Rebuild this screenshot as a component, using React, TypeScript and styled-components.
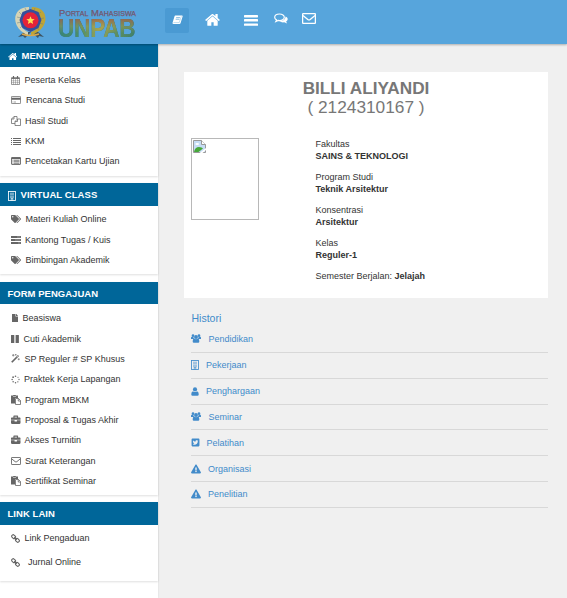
import React from 'react';
import styled, { createGlobalStyle } from 'styled-components';
import {
  FaTags, FaBriefcase, FaExclamationTriangle,
  FaTwitterSquare, FaFile,
} from 'react-icons/fa';

const GlobalStyle = createGlobalStyle`
  * { box-sizing: border-box; }
  body { margin: 0; background: #f0f0f0; font-family: "Liberation Sans", Arial, sans-serif; font-size: 9px; color: #333; }
`;

const Page = styled.div`
  height: 598px;
  display: flex;
  flex-direction: column;
  overflow: hidden;
`;
const TopBar = styled.header`
  position: relative;
  z-index: 1;
  height: 44px;
  flex: none;
  display: flex;
  align-items: flex-start;
  background: #57a5dc;
  box-shadow: 0 1px 2px rgba(0, 0, 0, 0.28);
`;
const Brand = styled.div`
  width: 165px;
  height: 44px;
  padding: 5px 0 0 14px;
  display: flex;
`;
const Wordmark = styled.div`
  width: 84px;
  margin: 3px 0 0 11px;
  white-space: nowrap;
`;
const Tagline = styled.div`
  height: 10px;
  line-height: 10px;
  font-size: 9.5px;
  font-variant: small-caps;
  letter-spacing: 0.05px;
  color: #74566f;
  -webkit-text-stroke: 0.25px #74566f;
  padding-left: 1px;
`;
const Acronym = styled.div`
  height: 20px;
  line-height: 20px;
  font-size: 26px;
  font-weight: bold;
  transform: scaleX(0.87);
  transform-origin: left;
  letter-spacing: -0.3px;
  width: 96px;
  color: transparent;
  background:
    linear-gradient(180deg, rgba(155, 100, 80, 0.85) 5%, rgba(175, 155, 80, 0.4) 42%, rgba(55, 120, 105, 0.1) 75%),
    linear-gradient(95deg, #38867a 0%, #4e9268 28%, #a9a950 50%, #629360 70%, #367c70 100%);
  background-clip: text;
  -webkit-background-clip: text;
  filter: drop-shadow(0.5px 0.6px 0.3px rgba(45, 75, 70, 0.6));
`;
const Nav = styled.nav`
  display: flex;
  align-items: flex-start;
`;
const NavItem = styled.a<{ $w: number; $top: number; $active?: boolean }>`
  width: ${(p) => p.$w}px;
  height: ${(p) => (p.$active ? 25 : 36)}px;
  margin-top: ${(p) => (p.$active ? 8 : 0)}px;
  padding-top: ${(p) => p.$top}px;
  border-radius: 2px;
  background: ${(p) => (p.$active ? '#4a9ad3' : 'transparent')};
  color: #fff;
  display: flex;
  justify-content: center;
  svg { display: block; }
`;
const Body = styled.div`
  flex: 1;
  display: flex;
`;
const Sidebar = styled.aside`
  width: 158px;
  flex: none;
  background: #fff;
  box-shadow: 0 0 2px rgba(0, 0, 0, 0.1);
`;
const Panel = styled.section<{ $h: number; $gap: number }>`
  height: ${(p) => p.$h}px;
  margin-bottom: ${(p) => p.$gap}px;
  background: #fff;
  box-shadow: 0 1px 2px rgba(0, 0, 0, 0.13);
`;
const PanelTitle = styled.h2<{ $h: number; $ls: number }>`
  margin: 0;
  height: ${(p) => p.$h}px;
  padding: 1px 0 0 7.5px;
  display: flex;
  align-items: center;
  background: #006699;
  color: #fff;
  font-size: 9.5px;
  line-height: 10px;
  font-weight: bold;
  letter-spacing: ${(p) => p.$ls}px;
  white-space: nowrap;
`;
const TitleIcon = styled.span<{ $w: number; $drop?: number }>`
  width: ${(p) => p.$w}px;
  padding-top: 1px;
  display: flex;
`;
const MenuList = styled.ul<{ $top: number }>`
  list-style: none;
  margin: 0;
  padding: ${(p) => p.$top}px 0 0 11px;
`;
const MenuItem = styled.li<{ $h: number }>`
  height: ${(p) => p.$h}px;
  display: flex;
  align-items: center;
  white-space: nowrap;
  color: #333;
`;
const IconSlot = styled.span<{ $w: number }>`
  width: ${(p) => p.$w}px;
  flex: none;
  display: flex;
  color: #666;
`;
const Content = styled.main`
  flex: 1;
  padding: 28px 19px 0 26px;
`;
const Card = styled.section`
  height: 226px;
  background: #fff;
  padding-top: 7px;
`;
const Name = styled.h1`
  margin: 0;
  text-align: center;
  font-size: 17.2px;
  line-height: 19px;
  color: #777;
`;
const StudentId = styled.div`
  text-align: center;
  font-size: 17.3px;
  line-height: 19px;
  color: #777;
`;
const Profile = styled.div`
  display: flex;
  padding: 21px 0 0 7px;
`;
const Photo = styled.div`
  width: 68px;
  height: 82px;
  border: 1px solid #b8b8b8;
  padding: 1px;
  margin-right: 56.5px;
`;
const Facts = styled.dl`
  margin: 0;
  line-height: 12px;
  color: #333;
`;
const Fact = styled.div`
  height: 33px;
  dt, dd { margin: 0; white-space: nowrap; }
  dd { font-weight: bold; }
`;
const History = styled.section`
  padding: 14px 0 0 7px;
  color: #428bca;
`;
const HistoryTitle = styled.h3`
  margin: 0;
  font-size: 10.5px;
  line-height: 13px;
  font-weight: normal;
  padding-left: 0.5px;
`;
const HistoryRow = styled.a<{ $h: number }>`
  height: ${(p) => p.$h}px;
  display: flex;
  align-items: center;
  border-bottom: 1px solid #d8d8d8;
`;
const HistoryIcon = styled.span<{ $w: number }>`
  width: ${(p) => p.$w}px;
  display: flex;
  flex: none;
`;

const Home = ({ w }: { w: number }) => (
  <svg width={w} height={w * 0.8} viewBox="0 256 1664 1300" preserveAspectRatio="none" fill="currentColor">
    <path d="M1408 992v480q0 26-19 45t-45 19h-384v-384h-256v384h-384q-26 0-45-19t-19-45v-480q0-1 .5-3t.5-3l575-474 575 474q1 2 1 6zm223-69l-62 74q-8 9-21 11h-3q-13 0-21-7l-692-577-692 577q-12 8-24 7-13-2-21-11l-62-74q-8-10-7-23.5t11-21.5l719-599q32-26 76-26t76 26l244 204v-195q0-14 9-23t23-9h192q14 0 23 9t9 23v408l219 182q10 8 11 21.5t-7 23.5z" />
  </svg>
);
const Book = () => (
  <svg width="11" height="10" viewBox="0 0 20 20" preserveAspectRatio="none" fill="none">
    <path d="M6 1h12q2 0 1.300 2L15.500 16.500Q15 18 13.500 18H3Q0.500 18 1 15.500L4.500 3Q5 1 6 1z" fill="#fff" />
    <path d="M7.500 5.200h7M6.600 8.500h7" stroke="#4a9ad3" strokeWidth="1.200" />
    <path d="M2.600 15.200h10.500L17 2.500" stroke="#8bbfe3" strokeWidth="1" />
  </svg>
);
const Bars = () => (
  <svg width="14" height="12" viewBox="0 0 14 12" fill="currentColor">
    <rect width="14" height="2.400" y="1" rx="0.600" /><rect width="14" height="2.400" y="5.100" rx="0.600" /><rect width="14" height="2.400" y="9.400" rx="0.600" />
  </svg>
);
const Chat = () => (
  <svg width="14" height="12" viewBox="0 0 14 12" fill="none" stroke="currentColor" strokeWidth="1.200">
    <path d="M5.500 1C2.700 1 .7 2.500.7 4.300c0 1.100.7 2 1.800 2.600L1.800 8.600l2.400-1.200c3.500.6 6.100-.9 6.100-3.100C10.300 2.500 8.300 1 5.500 1z" />
    <path d="M11.500 3.400c1.300.5 2.200 1.500 2.200 2.700 0 1-.6 1.900-1.600 2.500l1 2-2.800-1.300c-1.900.3-3.700-.1-4.900-1 3.600-.1 6.100-1.900 6.100-4.900z" fill="currentColor" stroke="none" />
  </svg>
);
const Mail = ({ w, h }: { w: number; h: number }) => (
  <svg width={w} height={h} viewBox="0 0 14 11" preserveAspectRatio="none" fill="none" stroke="currentColor" strokeWidth="1.300">
    <rect x="0.600" y="0.600" width="12.800" height="9.800" rx="0.900" /><path d="M1 2.500l4.800 3.900q1.200.9 2.400 0L13 2.500" />
  </svg>
);
const Calendar = () => (
  <svg width="9" height="9" viewBox="0 0 18 18" fill="none" stroke="currentColor">
    <path d="M1 3.500h16V17H1z" strokeWidth="1.300" /><path d="M1 4.500h16" strokeWidth="2.400" />
    <path d="M5 0v5M13 0v5" strokeWidth="2.400" /><path d="M5 6v11M9 6v11M13 6v11M1 9.500h16M1 13.200h16" strokeWidth="0.800" />
  </svg>
);
const CreditCard = () => (
  <svg width="10" height="8" viewBox="0 0 20 16" fill="none" stroke="currentColor">
    <rect x="0.800" y="0.800" width="18.400" height="14.400" rx="1.500" strokeWidth="1.600" /><path d="M1 5.500h18" strokeWidth="4" /><path d="M3 12h2M6 12h4" strokeWidth="1.200" />
  </svg>
);
const Copies = () => (
  <svg width="10" height="10" viewBox="0 0 20 20" fill="none" stroke="currentColor" strokeWidth="1.500">
    <path d="M8 15H1V6l5-5h6v5M6 1v5H1" /><path d="M13 6h6v13H8v-8zM13 6v5H8" />
  </svg>
);
const Lines = () => (
  <svg width="10" height="7" viewBox="0 0 10 7" fill="none" stroke="currentColor" shapeRendering="crispEdges">
    <path d="M0 .5h1M2 .5h8M0 2.500h1M2 2.500h8M0 4.500h1M2 4.500h8M0 6.500h1M2 6.500h8" strokeWidth="1" />
  </svg>
);
const ListBox = () => (
  <svg width="10" height="8" viewBox="0 0 20 16" fill="none" stroke="currentColor">
    <rect x="1" y="1" width="18" height="14" rx="1" strokeWidth="1.800" /><path d="M1 2.500h18" strokeWidth="3.400" /><path d="M3 6.500h2M6 6.500h11M3 9.500h2M6 9.500h11M3 12.500h2M6 12.500h11" strokeWidth="1.800" />
  </svg>
);
const Tasks = () => (
  <svg width="10" height="8" viewBox="0 0 20 16" fill="none" stroke="currentColor">
    <path d="M0 2h20M0 8h20M0 14h20" strokeWidth="4.200" /><path d="M12 2h7M8 8h11M14 14h5" stroke="#bbb" strokeWidth="1.200" />
  </svg>
);
const Building = () => (
  <svg width="8" height="10" viewBox="0 0 16 20" fill="none" stroke="currentColor">
    <rect x="1" y="1" width="14" height="18" strokeWidth="1.700" />
    <path d="M4 4.500h8M4 7.500h8M4 10.500h8M4 13.500h8" strokeWidth="1.600" strokeDasharray="1.500 0.600" /><path d="M6.500 19v-4h3v4" strokeWidth="1.400" />
  </svg>
);
const Columns = () => (
  <svg width="8" height="8" viewBox="0 0 8 8" fill="currentColor"><rect width="3.300" height="8" rx=".3" /><rect x="4.600" width="3.300" height="8" rx=".3" /></svg>
);
const Wand = () => (
  <svg width="9" height="9" viewBox="0 0 18 18" fill="none" stroke="currentColor">
    <path d="M1.500 16.500L15 3" strokeWidth="3.400" /><path d="M11.600 6.400l2.800-2.800" stroke="#fff" strokeWidth="1" />
    <path d="M4.500 0v5M2 2.500h5M9.500 0v3M8 1.500h3M15.500 8.500v4M13.500 10.500h4" strokeWidth="1.300" />
  </svg>
);
const Paste = () => (
  <svg width="10" height="10" viewBox="0 0 20 20" fill="none">
    <path d="M0 1h4l1-1h4l1 1h4v5H8v11H0z" fill="currentColor" /><path d="M4 3h6" stroke="#fff" strokeWidth="1" />
    <path d="M9 7h6l4 4v8H9zM14.500 7v5H19" stroke="currentColor" strokeWidth="1.600" />
  </svg>
);
const Spinner = () => (
  <svg width="9" height="9" viewBox="0 0 18 18" fill="currentColor">
    <circle cx="9" cy="2.500" r="1.600" /><circle cx="14" cy="4.500" r="1.100" /><circle cx="16" cy="9" r="1.300" /><circle cx="13.700" cy="13.700" r="1.400" /><circle cx="9" cy="15.700" r="1.500" /><circle cx="4.300" cy="13.700" r="1.500" /><circle cx="2.300" cy="9" r="1.500" /><circle cx="4.200" cy="4.300" r="1.700" />
  </svg>
);
const Chain = () => (
  <svg width="9" height="9" viewBox="0 0 18 18" fill="none" stroke="currentColor" strokeWidth="2.200">
    <rect x="1.200" y="2.400" width="8" height="5.800" rx="2.300" transform="rotate(45 5.200 5.300)" />
    <rect x="8.800" y="9.800" width="8" height="5.800" rx="2.300" transform="rotate(45 12.800 12.700)" /><path d="M6.500 6.500l5 5" />
  </svg>
);
const People = () => (
  <svg width="10" height="9" viewBox="0 0 20 18" fill="currentColor">
    <circle cx="4" cy="3.400" r="2.700" /><circle cx="16" cy="3.400" r="2.700" />
    <path d="M0 10V8q0-2.600 1.500-2.600l3.700 1Q5 9 6.500 10zM20 10V8q0-2.600-1.500-2.600l-3.700 1Q15 9 13.500 10z" />
    <circle cx="10" cy="6" r="3.900" />
    <path d="M6.500 9q3.500 3 7 0 3.200.5 3.200 5.500 0 3-2.500 3H5.800q-2.500 0-2.500-3 0-5 3.200-5.500z" />
  </svg>
);
const Person = () => (
  <svg width="8" height="9" viewBox="0 0 16 18" fill="currentColor">
    <circle cx="8" cy="4.800" r="4.200" /><path d="M4 8.500q4 3.400 8 0 3.500.6 3.500 6 0 3-2.700 3H3.200q-2.700 0-2.700-3 0-5.400 3.500-6z" />
  </svg>
);
const BrokenImage = () => (
  <svg width="13" height="13" viewBox="0 0 13 13">
    <path d="M.5.5h8l4 4v8H.5z" fill="#c5dcf5" stroke="#999" />
    <path d="M8.500.5v4h4" fill="#fff" stroke="#999" />
    <ellipse cx="4.200" cy="4" rx="1.900" ry="1.100" fill="#fff" />
    <path d="M1 12q1-5 5-5 3 0 4 1.500L5.500 12z" fill="#47a83a" />
    <path d="M6.500 13L13 8v2L9.500 13z" fill="#fff" />
  </svg>
);
const Crest = () => (
  <svg width="33" height="36" viewBox="0 0 33 36">
    <path d="M10 27l-6 5 5-1 2 2 6-6 7 6 1-2 5 1-6-5z" fill="#3e5462" />
    <path d="M15 2C0 2-3 17 7 26l7 5V27C4 23 3 10 15 6z" fill="#d7d4b4" />
    <path d="M18 2c16 0 17 16 7 24l-8 5v-4C28 23 28 9 17 6z" fill="#c0a535" />
    <path d="M5 7l3 3M3 12l4 1M3 18l4-1M6 23l3-3M11 3l2 4M27 7l-4 3M30 13l-5 1M29 19l-5-1M25 25l-3-4M21 3l-2 4" stroke="#657c87" strokeWidth=".5" />
    <path d="M16.500 4l8 3 3 8-3 8-8 4-8-4-3-8 3-8z" fill="#344f9d" />
    <circle cx="16.500" cy="15.300" r="8" fill="#e32239" />
    <path d="M16.500 11.300l1.200 2.600 3 .3-2.300 1.900.7 3-2.600-1.600-2.600 1.600.7-3-2.300-1.900 3-.3z" fill="#ffe252" />
    <path d="M8 29q8 3 17 0" stroke="#d7a84c" strokeWidth="1.500" fill="none" />
  </svg>
);

type Entry = [string, React.ReactNode, number];
interface Group { title: string; icon?: React.ReactNode; iconW?: number; ls: number; head: number; h: number; gap: number; top: number; row: number; items: Entry[] }

const groups: Group[] = [
  { title: 'MENU UTAMA', icon: <Home w={9.5} />, iconW: 14, ls: 0.04, head: 23, h: 132, gap: 7, top: 3, row: 20.3, items: [
    ['Peserta Kelas', <Calendar />, 13.5], ['Rencana Studi', <CreditCard />, 15], ['Hasil Studi', <Copies />, 14], ['KKM', <Lines />, 14], ['Pencetakan Kartu Ujian', <ListBox />, 14],
  ] },
  { title: 'VIRTUAL CLASS', icon: <Building />, iconW: 13, ls: 0.08, head: 23, h: 91, gap: 8, top: 3, row: 20.4, items: [
    ['Materi Kuliah Online', <FaTags size={10} />, 14.5], ['Kantong Tugas / Kuis', <Tasks />, 14], ['Bimbingan Akademik', <FaTags size={10} />, 14.5],
  ] },
  { title: 'FORM PENGAJUAN', ls: 0.02, head: 22, h: 213, gap: 7, top: 4, row: 20.35, items: [
    ['Beasiswa', <FaFile size={8} />, 11.5], ['Cuti Akademik', <Columns />, 12.5], ['SP Reguler # SP Khusus', <Wand />, 13.5],
    ['Praktek Kerja Lapangan', <Spinner />, 13], ['Program MBKM', <Paste />, 14], ['Proposal & Tugas Akhir', <FaBriefcase size={9.5} />, 14],
    ['Akses Turnitin', <FaBriefcase size={9.5} />, 13.5], ['Surat Keterangan', <Mail w={10} h={8} />, 14], ['Sertifikat Seminar', <Paste />, 14],
  ] },
  { title: 'LINK LAIN', ls: 0.05, head: 23, h: 79, gap: 0, top: 1, row: 24, items: [
    ['Link Pengaduan', <Chain />, 13.5], ['Jurnal Online', <Chain />, 17],
  ] },
];

const facts = [
  ['Fakultas', 'SAINS & TEKNOLOGI'], ['Program Studi', 'Teknik Arsitektur'], ['Konsentrasi', 'Arsitektur'], ['Kelas', 'Reguler-1'],
];

const history: Entry[] = [
  ['Pendidikan', <People />, 17.5], ['Pekerjaan', <Building />, 15], ['Penghargaan', <Person />, 15],
  ['Seminar', <People />, 17.5], ['Pelatihan', <FaTwitterSquare size={9} />, 15.5],
  ['Organisasi', <FaExclamationTriangle size={10} />, 17], ['Penelitian', <FaExclamationTriangle size={10} />, 17],
];

export default function App() {
  return (
    <Page>
      <GlobalStyle />
      <TopBar>
        <Brand>
          <Crest />
          <Wordmark><Tagline>Portal Mahasiswa</Tagline><Acronym>UNPAB</Acronym></Wordmark>
        </Brand>
        <Nav>
          <NavItem $w={24} $top={7} $active><Book /></NavItem>
          <NavItem $w={47} $top={14}><Home w={15} /></NavItem>
          <NavItem $w={30} $top={14}><Bars /></NavItem>
          <NavItem $w={29} $top={13}><Chat /></NavItem>
          <NavItem $w={27} $top={13}><Mail w={14} h={11} /></NavItem>
        </Nav>
      </TopBar>
      <Body>
        <Sidebar>
          {groups.map((g) => (
            <Panel key={g.title} $h={g.h} $gap={g.gap}>
              <PanelTitle $h={g.head} $ls={g.ls}>
                {g.icon && <TitleIcon $w={g.iconW ?? 14}>{g.icon}</TitleIcon>}{g.title}
              </PanelTitle>
              <MenuList $top={g.top}>
                {g.items.map(([label, icon, w]) => (
                  <MenuItem key={label} $h={g.row}><IconSlot $w={w}>{icon}</IconSlot>{label}</MenuItem>
                ))}
              </MenuList>
            </Panel>
          ))}
        </Sidebar>
        <Content>
          <Card>
            <Name>BILLI ALIYANDI</Name>
            <StudentId>( 2124310167 )</StudentId>
            <Profile>
              <Photo><BrokenImage /></Photo>
              <Facts>
                {facts.map(([k, v]) => <Fact key={k}><dt>{k}</dt><dd>{v}</dd></Fact>)}
                <div>Semester Berjalan: <b>Jelajah</b></div>
              </Facts>
            </Profile>
          </Card>
          <History>
            <HistoryTitle>Histori</HistoryTitle>
            {history.map(([label, icon, w], i) => (
              <HistoryRow key={label} $h={i === 0 ? 28 : 25.8}><HistoryIcon $w={w}>{icon}</HistoryIcon>{label}</HistoryRow>
            ))}
          </History>
        </Content>
      </Body>
    </Page>
  );
}
